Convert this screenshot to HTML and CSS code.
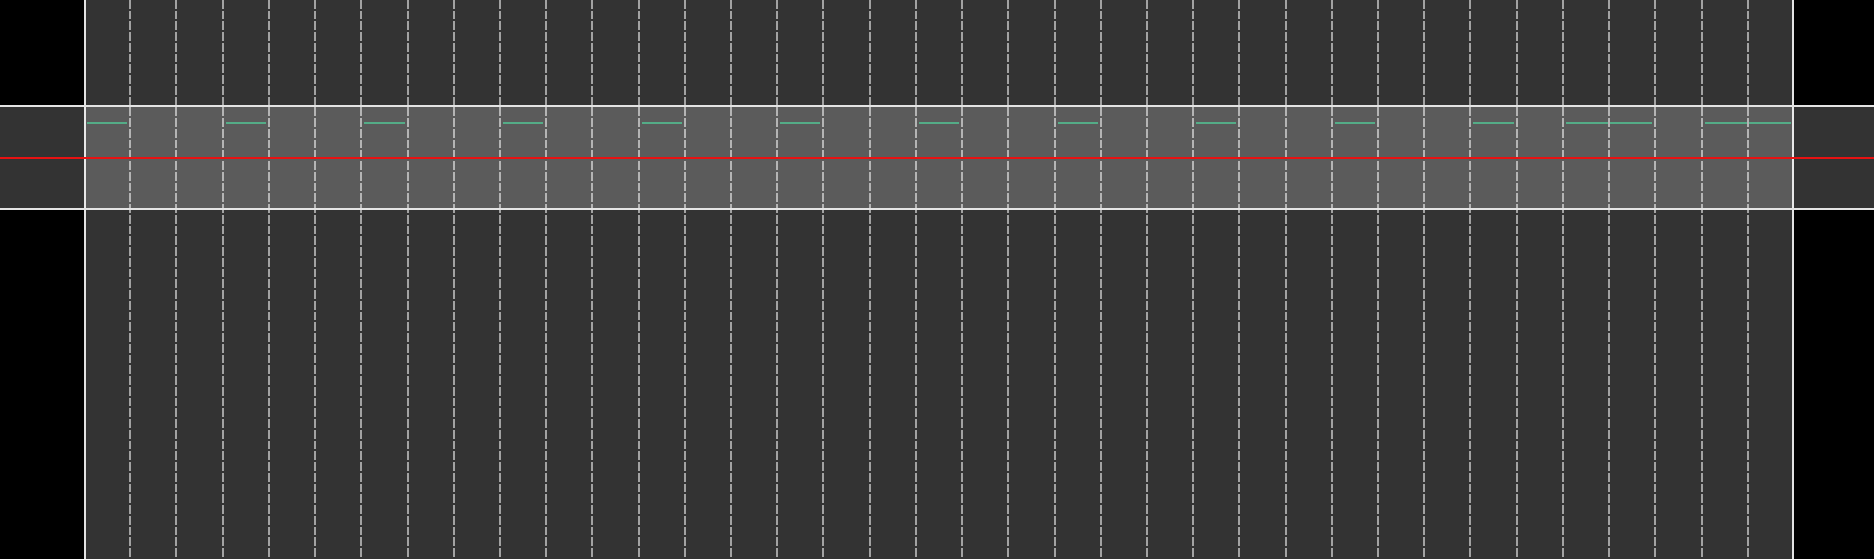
FILE: index.html
```html
<!DOCTYPE html>
<html lang="en">
<head>
<meta charset="utf-8">
<title>Timeline</title>
<link rel="stylesheet" href="styles.css">
</head>
<body>
<div class="view">
  <div class="side"></div>
  <div class="plot">
    <div class="col"><span class="seg"></span></div>
    <div class="col"></div>
    <div class="col"></div>
    <div class="col"><span class="seg"></span></div>
    <div class="col"></div>
    <div class="col"></div>
    <div class="col"><span class="seg"></span></div>
    <div class="col"></div>
    <div class="col"></div>
    <div class="col"><span class="seg"></span></div>
    <div class="col"></div>
    <div class="col"></div>
    <div class="col"><span class="seg"></span></div>
    <div class="col"></div>
    <div class="col"></div>
    <div class="col"><span class="seg"></span></div>
    <div class="col"></div>
    <div class="col"></div>
    <div class="col"><span class="seg"></span></div>
    <div class="col"></div>
    <div class="col"></div>
    <div class="col"><span class="seg"></span></div>
    <div class="col"></div>
    <div class="col"></div>
    <div class="col"><span class="seg"></span></div>
    <div class="col"></div>
    <div class="col"></div>
    <div class="col"><span class="seg"></span></div>
    <div class="col"></div>
    <div class="col"></div>
    <div class="col"><span class="seg"></span></div>
    <div class="col"></div>
    <div class="col"><span class="seg seg-start"></span></div>
    <div class="col"><span class="seg seg-end"></span></div>
    <div class="col"></div>
    <div class="col"><span class="seg seg-start"></span></div>
    <div class="col"><span class="seg seg-end"></span></div>
  </div>
  <div class="side side-right"></div>
  <div class="band"></div>
  <div class="cursor"></div>
</div>
</body>
</html>
```

FILE: styles.css
```css
html, body {
  margin: 0;
  padding: 0;
  background: #000;
  font-family: "Liberation Sans", Arial, sans-serif;
}

.view {
  position: relative;
  display: flex;
  width: 1874px;
  height: 559px;
  overflow: hidden;
}

.side {
  width: 84px;
  flex: none;
  background: #000;
}

.side-right {
  flex: 1;
  width: auto;
}

.plot {
  width: 1710px;
  flex: none;
  display: grid;
  grid-template-columns: repeat(37, 1fr);
  background: #333333;
  box-shadow: inset 2px 0 0 #e4e4e4, inset -2px 0 0 #e4e4e4;
}

.col {
  position: relative;
  display: flex;
  flex-direction: column;
  padding-top: 122px;
}

.col + .col::before {
  content: "";
  position: absolute;
  top: 0;
  bottom: 0;
  left: -1px;
  width: 2px;
  background: repeating-linear-gradient(to bottom, #a2a2a2 0 8.75px, transparent 8.75px 10.75px);
}

.seg {
  display: block;
  height: 2px;
  margin: 0 3px;
  background: #2a986a;
}

.seg-start {
  margin-right: 0;
}

.seg-end {
  margin-left: 0;
}

.band {
  position: absolute;
  left: 0;
  right: 0;
  top: 105px;
  height: 101px;
  border-top: 2px solid #e4e4e4;
  border-bottom: 2px solid #e4e4e4;
  background: rgba(255, 255, 255, 0.2);
}

.cursor {
  position: absolute;
  left: 0;
  right: 0;
  top: 157px;
  height: 2px;
  background: #e81212;
}
```
